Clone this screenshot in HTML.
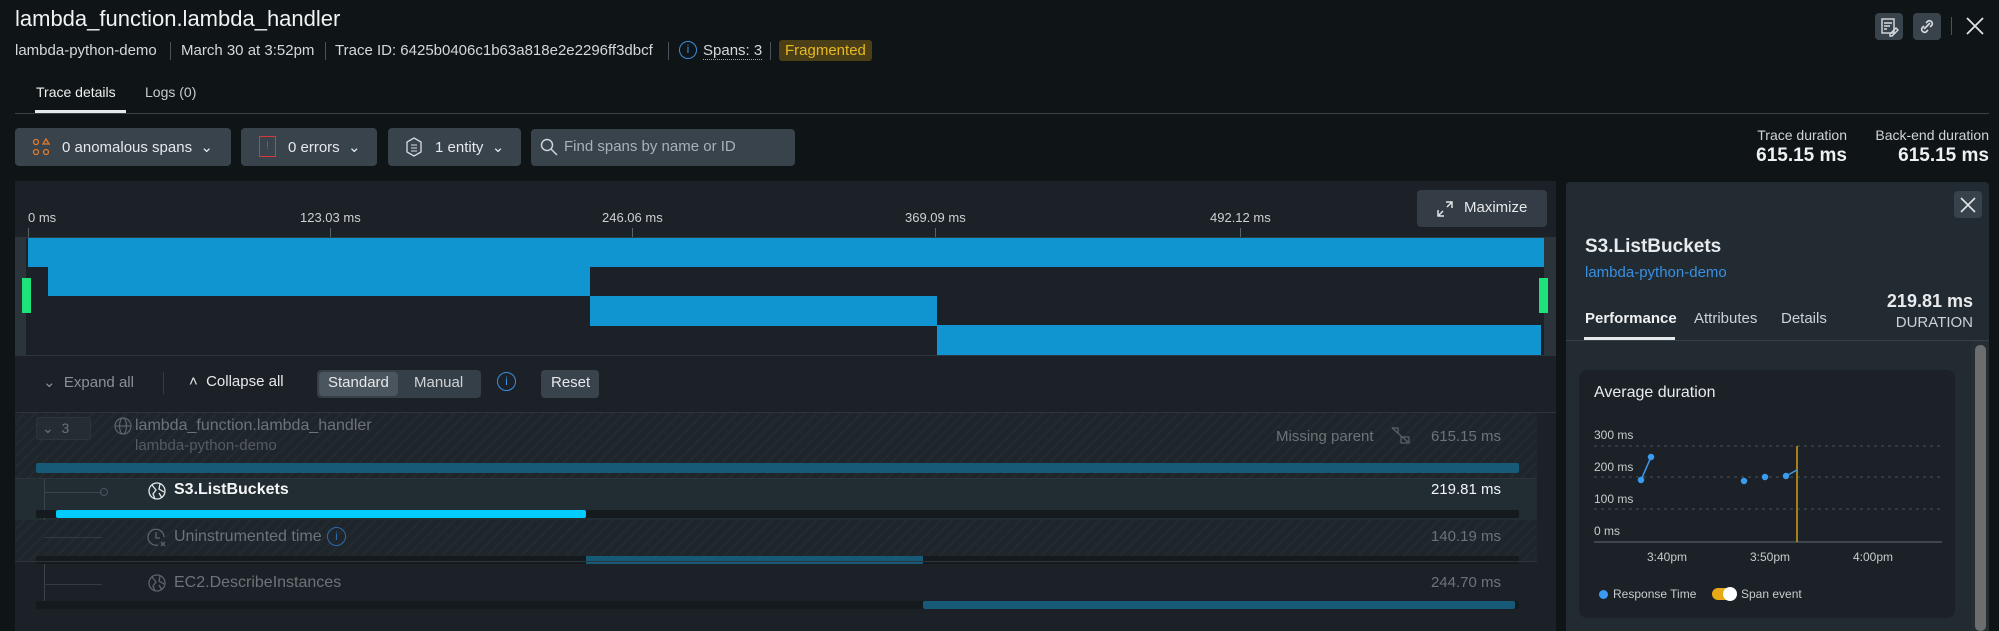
<!DOCTYPE html>
<html><head><meta charset="utf-8"><style>
*{box-sizing:border-box;margin:0;padding:0}
body{width:1999px;height:631px;background:#0f1416;font-family:"Liberation Sans",sans-serif;color:#e6e9eb;position:relative;overflow:hidden}
.a{position:absolute;white-space:nowrap}
.btn{position:absolute;background:#39434c;border-radius:4px}
.sep{position:absolute;width:1px;background:#4a545c}
.hatch{background:repeating-linear-gradient(135deg,#1e252b 0 6px,#232a30 6px 8px)}
.dim{color:#6c7479}
</style></head><body>
<div class="a" style="left:15px;top:6px;font-size:22px;color:#f0f2f3">lambda_function.lambda_handler</div>
<div class="a" style="left:15px;top:42px;font-size:15px;color:#d4d8db">lambda-python-demo</div>
<div class="sep" style="left:170px;top:42px;height:18px"></div>
<div class="a" style="left:181px;top:42px;font-size:15px;color:#d4d8db">March 30 at 3:52pm</div>
<div class="sep" style="left:325px;top:42px;height:18px"></div>
<div class="a" style="left:335px;top:42px;font-size:15px;color:#d4d8db">Trace ID: 6425b0406c1b63a818e2e2296ff3dbcf</div>
<div class="sep" style="left:668px;top:42px;height:18px"></div>
<div class="a" style="left:679px;top:41px;width:18px;height:18px;border:1.5px solid #3a8fe0;border-radius:50%;font-size:12px;color:#3a8fe0;text-align:center;line-height:15px">i</div>
<div class="a" style="left:703px;top:42px;font-size:15px;color:#d4d8db;border-bottom:1px dotted #aaa">Spans: 3</div>
<div class="sep" style="left:770px;top:42px;height:18px"></div>
<div class="a" style="left:779px;top:40px;height:21px;padding:0 6px;background:#4a3f17;color:#e8b923;font-size:15px;line-height:21px;border-radius:3px">Fragmented</div>

<div class="btn" style="left:1875px;top:13px;width:28px;height:27px"><svg width="28" height="27" viewBox="0 0 28 27"><g fill="none" stroke="#d8dcdf" stroke-width="1.4"><rect x="7" y="6" width="12" height="14"/><path d="M9 10h8M9 13h6M9 16h3M15 21l6-6 2 2-6 6h-2z"/></g></svg></div>
<div class="btn" style="left:1913px;top:13px;width:28px;height:27px"><svg width="28" height="27" viewBox="0 0 28 27"><g fill="none" stroke="#d8dcdf" stroke-width="1.6"><path d="M13 10l2-2a3 3 0 014 4l-2 2M15 17l-2 2a3 3 0 01-4-4l2-2M11 16l6-6"/></g></svg></div>
<div class="sep" style="left:1951px;top:17px;height:18px"></div>
<svg class="a" style="left:1966px;top:17px" width="18" height="18"><path d="M1 1L17 17M17 1L1 17" stroke="#e0e3e5" stroke-width="1.8"/></svg>

<div class="a" style="left:36px;top:84px;font-size:14px;color:#eef0f1">Trace details</div>
<div class="a" style="left:145px;top:84px;font-size:14px;color:#c8cdd0">Logs (0)</div>
<div class="a" style="left:15px;top:113px;width:1974px;height:1px;background:#3a4248"></div>
<div class="a" style="left:35px;top:110px;width:91px;height:3px;background:#e6e9eb"></div>

<div class="btn" style="left:15px;top:128px;width:216px;height:38px"></div>
<svg class="a" style="left:32px;top:138px" width="18" height="18"><g fill="none" stroke="#e07b2c" stroke-width="1.3"><circle cx="4" cy="4" r="2.5"/><path d="M14 1l3 5h-6z"/><circle cx="4" cy="14" r="2.5"/><circle cx="14" cy="14" r="2.5"/></g></svg>
<div class="a" style="left:62px;top:138px;font-size:15px">0 anomalous spans &nbsp;⌄</div>
<div class="btn" style="left:241px;top:128px;width:136px;height:38px"></div>
<div class="a" style="left:259px;top:136px;width:17px;height:21px;border:1.4px solid #d43a3a;font-size:11px;color:#d43a3a;text-align:center;line-height:18px">!</div>
<div class="a" style="left:288px;top:138px;font-size:15px">0 errors &nbsp;⌄</div>
<div class="btn" style="left:388px;top:128px;width:133px;height:38px"></div>
<svg class="a" style="left:405px;top:137px" width="18" height="20"><path d="M9 1l7 4v10l-7 4-7-4V5z" fill="none" stroke="#d8dcdf" stroke-width="1.3"/><path d="M6 8h6M6 11h6M6 14h6" stroke="#d8dcdf"/></svg>
<div class="a" style="left:435px;top:138px;font-size:15px">1 entity &nbsp;⌄</div>
<div class="btn" style="left:531px;top:129px;width:264px;height:37px"></div>
<svg class="a" style="left:540px;top:138px" width="18" height="18"><circle cx="7" cy="7" r="5.5" fill="none" stroke="#cfd3d6" stroke-width="1.5"/><path d="M11 11l6 6" stroke="#cfd3d6" stroke-width="1.5"/></svg>
<div class="a" style="left:564px;top:138px;font-size:15px;color:#aab1b6">Find spans by name or ID</div>

<div class="a" style="left:1751px;top:127px;width:96px;text-align:right;font-size:14px;color:#d0d4d7">Trace duration</div>
<div class="a" style="left:1720px;top:145px;width:127px;text-align:right;font-size:19px;font-weight:bold;color:#eef0f1">615.15 ms</div>
<div class="a" style="left:1860px;top:127px;width:129px;text-align:right;font-size:14px;color:#d0d4d7">Back-end duration</div>
<div class="a" style="left:1860px;top:145px;width:129px;text-align:right;font-size:19px;font-weight:bold;color:#eef0f1">615.15 ms</div>

<!-- main panel -->
<div class="a" style="left:15px;top:181px;width:1541px;height:450px;background:#1b2127"></div>
<div class="btn" style="left:1417px;top:190px;width:130px;height:37px;background:#343d45"></div>
<svg class="a" style="left:1436px;top:200px" width="18" height="18"><path d="M10 2h6v6M16 2l-5 5M8 16H2v-6M2 16l5-5" fill="none" stroke="#e0e3e5" stroke-width="1.5"/></svg>
<div class="a" style="left:1464px;top:199px;font-size:15px">Maximize</div>
<div class="a" style="left:28px;top:210px;font-size:13px;color:#cdd1d4">0 ms</div>
<div class="a" style="left:300px;top:210px;font-size:13px;color:#cdd1d4">123.03 ms</div>
<div class="a" style="left:602px;top:210px;font-size:13px;color:#cdd1d4">246.06 ms</div>
<div class="a" style="left:905px;top:210px;font-size:13px;color:#cdd1d4">369.09 ms</div>
<div class="a" style="left:1210px;top:210px;font-size:13px;color:#cdd1d4">492.12 ms</div>
<div class="a" style="left:28px;top:228px;width:1px;height:9px;background:#566"></div>
<div class="a" style="left:330px;top:228px;width:1px;height:9px;background:#566"></div>
<div class="a" style="left:632px;top:228px;width:1px;height:9px;background:#566"></div>
<div class="a" style="left:935px;top:228px;width:1px;height:9px;background:#566"></div>
<div class="a" style="left:1240px;top:228px;width:1px;height:9px;background:#566"></div>
<div class="a" style="left:15px;top:237px;width:1541px;height:1px;background:#2f3a42"></div>
<div class="a" style="left:15px;top:237px;width:11px;height:118px;background:#2b343b"></div>
<div class="a" style="left:1544px;top:237px;width:12px;height:118px;background:#2b343b"></div>
<div class="a" style="left:28px;top:238px;width:1516px;height:29px;background:#1195d0"></div>
<div class="a" style="left:48px;top:266px;width:542px;height:30px;background:#1195d0"></div>
<div class="a" style="left:590px;top:296px;width:347px;height:30px;background:#1195d0"></div>
<div class="a" style="left:937px;top:325px;width:604px;height:30px;background:#1195d0"></div>
<div class="a" style="left:22px;top:278px;width:9px;height:35px;background:#1ee27a"></div>
<div class="a" style="left:1539px;top:278px;width:9px;height:35px;background:#1ee27a"></div>
<div class="a" style="left:15px;top:355px;width:1541px;height:1px;background:#2c353c"></div>

<div class="a" style="left:43px;top:373px;font-size:15px;color:#8a9196">⌄ &nbsp;Expand all</div>
<div class="sep" style="left:163px;top:372px;height:22px;background:#333c43"></div>
<div class="a" style="left:189px;top:373px;font-size:15px;color:#e6e9eb">˄ &nbsp;Collapse all</div>
<div class="btn" style="left:317px;top:370px;width:164px;height:28px;background:#353f47"></div>
<div class="btn" style="left:319px;top:372px;width:79px;height:24px;background:#4b555d"></div>
<div class="a" style="left:328px;top:374px;font-size:15px;color:#e6e9eb">Standard</div>
<div class="a" style="left:414px;top:374px;font-size:15px;color:#d0d4d7">Manual</div>
<div class="a" style="left:497px;top:372px;width:19px;height:19px;border:1.5px solid #3a8fe0;border-radius:50%;font-size:12px;color:#3a8fe0;text-align:center;line-height:16px">i</div>
<div class="btn" style="left:541px;top:370px;width:58px;height:28px"></div>
<div class="a" style="left:551px;top:374px;font-size:15px">Reset</div>

<div class="a" style="left:15px;top:412px;width:1541px;height:1px;background:#2c353c"></div>
<div class="a hatch" style="left:15px;top:413px;width:1522px;height:65px"></div>
<div class="a" style="left:36px;top:417px;width:55px;height:23px;background:#252c32;border-radius:3px;border:1px solid #2d353b"></div>
<div class="a dim" style="left:42px;top:420px;font-size:14px">⌄ &nbsp;3</div>
<svg class="a" style="left:113px;top:416px" width="20" height="20"><g fill="none" stroke="#5d656a" stroke-width="1.2"><circle cx="10" cy="10" r="8"/><ellipse cx="10" cy="10" rx="3.5" ry="8"/><path d="M2 10h16"/></g></svg>
<div class="a dim" style="left:135px;top:417px;font-size:16px">lambda_function.lambda_handler</div>
<div class="a" style="left:135px;top:437px;font-size:15px;color:#545c62">lambda-python-demo</div>
<div class="a dim" style="left:1276px;top:428px;font-size:15px">Missing parent</div>
<svg class="a" style="left:1391px;top:426px" width="20" height="18"><g fill="none" stroke="#5d656a" stroke-width="1.2"><path d="M1 2h6v5M1 2l16 14"/><rect x="10" y="11" width="8" height="6"/></g></svg>
<div class="a dim" style="left:1420px;top:428px;width:81px;text-align:right;font-size:15px">615.15 ms</div>
<div class="a" style="left:36px;top:463px;width:1483px;height:10px;background:#175a78;border-radius:2px"></div>
<div class="a" style="left:15px;top:478px;width:1522px;height:1px;background:#2c353c"></div>

<div class="a" style="left:15px;top:479px;width:1522px;height:41px;background:#222c33"></div>
<div class="a" style="left:44px;top:479px;width:1px;height:128px;background:#3a444b"></div>
<div class="a" style="left:44px;top:492px;width:58px;height:1px;background:#3a444b"></div>
<div class="a" style="left:100px;top:488px;width:8px;height:8px;border:1px solid #4a545b;border-radius:50%"></div>
<svg class="a" style="left:147px;top:481px" width="20" height="20"><g fill="none" stroke="#e6e9eb" stroke-width="1.3"><circle cx="10" cy="10" r="8"/><path d="M5 4l4 5-3 4 2 5M13 3l-1 5 5 3M12 12l3 5"/></g></svg>
<div class="a" style="left:174px;top:481px;font-size:16px;font-weight:bold;color:#f3f5f6">S3.ListBuckets</div>
<div class="a" style="left:1420px;top:481px;width:81px;text-align:right;font-size:15px;color:#f3f5f6">219.81 ms</div>
<div class="a" style="left:36px;top:510px;width:1483px;height:8px;background:#141a1e;border-radius:2px"></div>
<div class="a" style="left:56px;top:510px;width:530px;height:8px;background:#00ccff;border-radius:2px"></div>

<div class="a hatch" style="left:15px;top:520px;width:1522px;height:41px"></div>
<div class="a" style="left:44px;top:537px;width:58px;height:1px;background:#333c42"></div>
<svg class="a" style="left:147px;top:527px" width="20" height="22"><g fill="none" stroke="#5d656a" stroke-width="1.3"><path d="M17 10a8 8 0 10-6 8"/><path d="M9 5v6h4M14 15l4 4M18 15l-4 4"/></g></svg>
<div class="a dim" style="left:174px;top:528px;font-size:16px">Uninstrumented time</div>
<div class="a" style="left:327px;top:527px;width:19px;height:19px;border:1.3px solid #2c6ab0;border-radius:50%;font-size:12px;color:#2c6ab0;text-align:center;line-height:16px">i</div>
<div class="a dim" style="left:1420px;top:528px;width:81px;text-align:right;font-size:15px">140.19 ms</div>
<div class="a" style="left:36px;top:556px;width:1483px;height:8px;background:#141a1e;border-radius:2px"></div>
<div class="a" style="left:586px;top:556px;width:337px;height:8px;background:#175a78"></div>
<div class="a" style="left:15px;top:561px;width:1522px;height:1px;background:#2c353c"></div>

<div class="a" style="left:44px;top:584px;width:58px;height:1px;background:#333c42"></div>
<svg class="a" style="left:147px;top:573px" width="20" height="20"><g fill="none" stroke="#5d656a" stroke-width="1.3"><circle cx="10" cy="10" r="8"/><path d="M5 4l4 5-3 4 2 5M13 3l-1 5 5 3M12 12l3 5"/></g></svg>
<div class="a dim" style="left:174px;top:574px;font-size:16px">EC2.DescribeInstances</div>
<div class="a dim" style="left:1420px;top:574px;width:81px;text-align:right;font-size:15px">244.70 ms</div>
<div class="a" style="left:36px;top:601px;width:1483px;height:8px;background:#141a1e;border-radius:2px"></div>
<div class="a" style="left:923px;top:601px;width:592px;height:8px;background:#175a78;border-radius:2px"></div>

<!-- right panel -->
<div class="a" style="left:1566px;top:182px;width:423px;height:449px;background:#222b32;border-radius:4px 4px 0 0"></div>
<div class="btn" style="left:1954px;top:191px;width:28px;height:27px;background:#38424a"></div>
<svg class="a" style="left:1960px;top:197px" width="16" height="16"><path d="M1 1L15 15M15 1L1 15" stroke="#e0e3e5" stroke-width="1.6"/></svg>
<div class="a" style="left:1585px;top:236px;font-size:19px;font-weight:bold;color:#e8ebed">S3.ListBuckets</div>
<div class="a" style="left:1585px;top:264px;font-size:15px;color:#3a8fe0">lambda-python-demo</div>
<div class="a" style="left:1585px;top:310px;font-size:15px;font-weight:bold;color:#eef0f1">Performance</div>
<div class="a" style="left:1694px;top:310px;font-size:15px;color:#cdd1d4">Attributes</div>
<div class="a" style="left:1781px;top:310px;font-size:15px;color:#cdd1d4">Details</div>
<div class="a" style="left:1870px;top:291px;width:103px;text-align:right;font-size:18px;font-weight:bold;color:#e8ebed">219.81 ms</div>
<div class="a" style="left:1870px;top:314px;width:103px;text-align:right;font-size:15px;color:#cdd1d4">DURATION</div>
<div class="a" style="left:1566px;top:340px;width:423px;height:1px;background:#384148"></div>
<div class="a" style="left:1584px;top:337px;width:91px;height:3px;background:#e6e9eb"></div>
<div class="a" style="left:1971px;top:341px;width:18px;height:290px;background:#262e34"></div>
<div class="a" style="left:1975px;top:345px;width:11px;height:286px;background:#6b6d6f;border-radius:5px"></div>
<div class="a" style="left:1579px;top:370px;width:376px;height:248px;background:#1b2127;border-radius:8px"></div>
<div class="a" style="left:1594px;top:384px;font-size:16px;color:#e8ebed">Average duration</div>
<div class="a" style="left:1594px;top:428px;font-size:12px;color:#c6cbce">300 ms</div>
<div class="a" style="left:1594px;top:460px;font-size:12px;color:#c6cbce">200 ms</div>
<div class="a" style="left:1594px;top:492px;font-size:12px;color:#c6cbce">100 ms</div>
<div class="a" style="left:1594px;top:524px;font-size:12px;color:#c6cbce">0 ms</div>
<svg class="a" style="left:1579px;top:430px" width="376" height="120">
<g stroke="#4a545b" stroke-dasharray="3 4"><path d="M15 16H363M15 47H363M15 79H363"/></g>
<path d="M15 112H363" stroke="#4a545b" stroke-width="1.5"/>
<path d="M218 16V112" stroke="#a57f1a" stroke-width="2"/>
<g fill="#3a9cf0" stroke="#3a9cf0" stroke-width="1.5"><path d="M62 50L72 27M207 46L218 40" fill="none"/><circle cx="62" cy="50" r="2.5"/><circle cx="72" cy="27" r="2.5"/><circle cx="165" cy="51" r="2.5"/><circle cx="186" cy="47" r="2.5"/><circle cx="207" cy="46" r="2.5"/></g>
</svg>
<div class="a" style="left:1647px;top:550px;font-size:12px;color:#c6cbce">3:40pm</div>
<div class="a" style="left:1750px;top:550px;font-size:12px;color:#c6cbce">3:50pm</div>
<div class="a" style="left:1853px;top:550px;font-size:12px;color:#c6cbce">4:00pm</div>
<div class="a" style="left:1599px;top:590px;width:9px;height:9px;border-radius:50%;background:#3a9cf0"></div>
<div class="a" style="left:1613px;top:587px;font-size:12px;color:#c6cbce">Response Time</div>
<div class="a" style="left:1712px;top:588px;width:23px;height:12px;border-radius:6px;background:#e8a916"></div>
<div class="a" style="left:1723px;top:587px;width:14px;height:14px;border-radius:50%;background:#fff"></div>
<div class="a" style="left:1741px;top:587px;font-size:12px;color:#c6cbce">Span event</div>
</body></html>
